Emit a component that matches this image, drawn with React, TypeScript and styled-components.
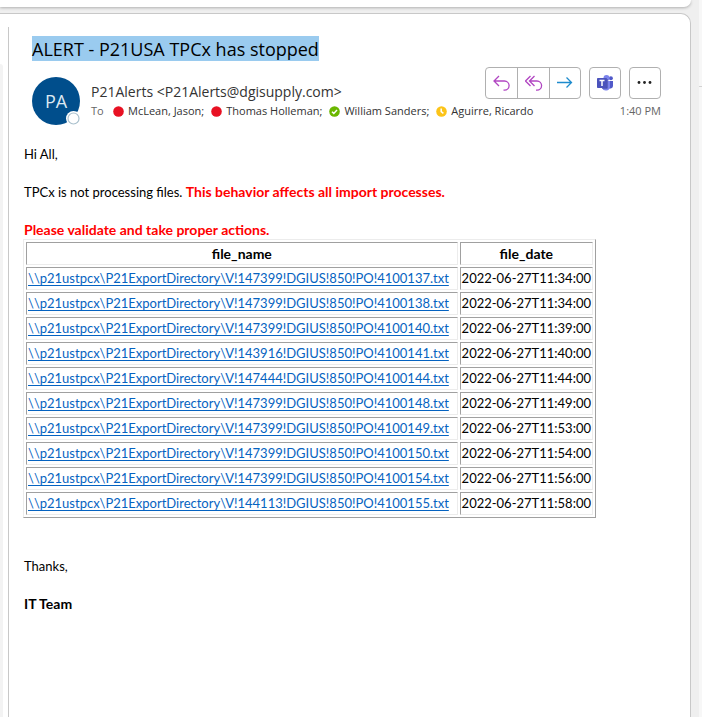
import React from "react";
import styled, { createGlobalStyle } from "styled-components";

const GlobalStyle = createGlobalStyle`
  * { box-sizing: border-box; }
  body { margin: 0; background: #efefef; }
`;

const uiFont = `"Open Sans", "Noto Sans", sans-serif`;

const Window = styled.div`
  display: flex;
  min-height: 100vh;
  font-family: ${uiFont};
  color: #333;
`;

const Workspace = styled.div`
  flex: 1;
  min-width: 0;
  display: flex;
  flex-direction: column;
  gap: 6px;
`;

const CommandPanel = styled.div`
  height: 7px;
  background: #fff;
  border-radius: 0 0 8px 0;
  box-shadow: 0 1px 3px #b0b0b0;
`;

const ReadingPanel = styled.div`
  flex: 1;
  display: flex;
  background: #fff;
  border: 1px solid #c8c8c8;
  border-width: 1px 1px 0 0;
  border-radius: 0 10px 0 0;
`;

const ListEdge = styled.div`
  width: 3px;
  margin-top: 50px;
  background: #f3f3f3;
  border-radius: 0 4px 0 0;
`;

const Message = styled.article`
  flex: 1;
  min-width: 0;
  margin: 13px 0 0 5px;
  padding: 9px 29px 0 15px;
  border-left: 1px solid #c8c8c8;
`;

const SideGutter = styled.div`
  width: 11px;
  flex: none;
  display: flex;
  flex-direction: column;
  padding-left: 8px;
`;

const SideTop = styled.div`
  height: 87px;
  background: #f7f7f7;
  border-bottom: 1px solid #d2d2d2;
`;

const SideRest = styled.div`
  flex: 1;
  background: #f7f7f7;
`;

const Subject = styled.h1`
  width: fit-content;
  margin: 0 0 0 8px;
  padding-top: 1px;
  font-size: 18px;
  line-height: 24px;
  font-weight: 400;
  color: #000;
  background: #9acbef;
  white-space: nowrap;
`;

const Header = styled.header`
  display: flex;
  margin: 5px 0 0 8px;
`;

const Avatar = styled.svg`
  flex: none;
  width: 49px;
  height: 49px;
  margin: 11px 10px 0 0;
  font-family: ${uiFont};
`;

const Details = styled.div`
  flex: 1;
  min-width: 0;
`;

const TopLine = styled.div`
  display: flex;
  justify-content: space-between;
`;

const BottomLine = styled.div`
  display: flex;
  justify-content: space-between;
  font-size: 11px;
  line-height: 18px;
  white-space: nowrap;
`;

const Sender = styled.div`
  padding-top: 16px;
  font-size: 14px;
  line-height: 20px;
  white-space: nowrap;
`;

const Actions = styled.div`
  display: flex;
  gap: 8px;
  padding-top: 1px;
`;

const ButtonGroup = styled.div`
  display: flex;
  height: 32px;
  border: 1px solid #b0b0b0;
  border-radius: 4px;
`;

const ActionButton = styled.button`
  width: 31px;
  padding: 0;
  border: 0;
  background: none;
  display: flex;
  align-items: center;
  justify-content: center;

  & + & {
    width: 32px;
    border-left: 1px solid #b0b0b0;
  }

  & + &:last-child {
    width: 31px;
  }
`;

const SingleButton = styled(ActionButton)`
  width: 30px;
`;

const Recipients = styled.div`
  display: flex;
  align-items: center;
`;

const ToLabel = styled.span`
  width: 22px;
  color: #666;
`;

const Recipient = styled.span`
  display: flex;
  align-items: center;
  gap: 4px;
  margin-right: 7px;
`;

const Time = styled.time`
  color: #666;
`;

const Body = styled.div`
  margin-top: 19px;
  font-family: Lato, "Liberation Sans", sans-serif;
  font-size: 13px;
  line-height: 19px;
  color: #000;
`;

const Paragraph = styled.p<{ $gap?: number }>`
  margin: 0 0 ${(p) => p.$gap ?? 19}px;
`;

const Strong = styled.strong<{ $alert?: boolean }>`
  font-size: 14px;
  line-height: 16px;
  color: ${(p) => (p.$alert ? "#f00" : "inherit")};
`;

const FileTable = styled.table`
  width: 100%;
  max-width: 573px;
  margin: -1px 0 39px -1px;
  border: 1px solid;
  border-color: #ececec #a0a0a0 #a0a0a0 #ececec;
  border-spacing: 2px;
`;

const cell = `
  height: 23px;
  padding: 0 1px;
  border: 1px solid;
  border-color: #a0a0a0 #ececec #ececec #a0a0a0;
  white-space: nowrap;
`;

const HeadCell = styled.th<{ $width?: number }>`
  ${cell}
  width: ${(p) => (p.$width ? `${p.$width}px` : "auto")};
  font-size: 14px;
`;

const Cell = styled.td`
  ${cell}
`;

const FileLink = styled.a`
  color: #0563c1;
  text-underline-offset: 2px;
`;

type Status = "busy" | "available" | "away";

const StatusIcon = ({ status }: { status: Status }) => (
  <svg width="11" height="11" viewBox="0 0 11 11" role="img" aria-label={status}>
    <circle cx="5.5" cy="5.5" r="5.3" fill={{ busy: "#e81123", available: "#6bb700", away: "#fcc419" }[status]} />
    {status === "available" && <path d="M3 5.7 4.8 7.4 8 4" fill="none" stroke="#fff" strokeWidth="1.5" />}
    {status === "away" && <path d="M5.2 2.5V5.7L7.4 7.4" fill="none" stroke="#fff" strokeWidth="1.5" />}
  </svg>
);

const ReplyIcon = () => (
  <svg width="18" height="18" viewBox="0 0 18 18" fill="none" stroke="#b146c2" strokeWidth="1.3">
    <path d="M6 2 1 7 6 12M1 7H11.5A4.6 4.6 0 0 1 11.5 16.2H10.5" />
  </svg>
);

const ReplyAllIcon = () => (
  <svg width="18" height="18" viewBox="0 0 18 18" fill="none" stroke="#b146c2" strokeWidth="1.3">
    <path d="M5.5 2 .5 7 5.5 12M9.5 2 4.5 7 9.5 12M4.5 7H12A4.6 4.6 0 0 1 12 16.2H11" />
  </svg>
);

const ForwardIcon = () => (
  <svg width="18" height="18" viewBox="0 0 18 18" fill="none" stroke="#1e8bcd" strokeWidth="1.3">
    <path d="M1 8.5H15.5M10.5 3.5 15.5 8.5 10.5 13.5" />
  </svg>
);

const TeamsIcon = () => (
  <svg width="18" height="18" viewBox="0 0 18 18">
    <circle cx="14.9" cy="4.2" r="2" fill="#5059c9" />
    <path d="M12.5 7H17V12A2.8 2.8 0 0 1 12.5 14Z" fill="#5059c9" />
    <circle cx="10.5" cy="4" r="3" fill="#7b83eb" />
    <path d="M6 7H14V13A4.2 4.2 0 0 1 6 14Z" fill="#7b83eb" />
    <path d="M7 5H11.5V14.5H6Z" fill="#3d4494" />
    <rect x="1" y="4" width="10" height="10" rx="0.8" fill="#4b53bc" />
    <path d="M3.5 6.5H8.5M6 6.5V12" stroke="#fff" strokeWidth="1.5" />
  </svg>
);

const MoreIcon = () => (
  <svg width="18" height="18" viewBox="0 0 18 18" fill="#222">
    <circle cx="3" cy="8.5" r="1.4" />
    <circle cx="8.5" cy="8.5" r="1.4" />
    <circle cx="14" cy="8.5" r="1.4" />
  </svg>
);

const recipients: { name: string; status: Status }[] = [
  { name: "McLean, Jason;", status: "busy" },
  { name: "Thomas Holleman;", status: "busy" },
  { name: "William Sanders;", status: "available" },
  { name: "Aguirre, Ricardo", status: "away" },
];

const files = [
  ["147399", "4100137", "11:34:00"],
  ["147399", "4100138", "11:34:00"],
  ["147399", "4100140", "11:39:00"],
  ["143916", "4100141", "11:40:00"],
  ["147444", "4100144", "11:44:00"],
  ["147399", "4100148", "11:49:00"],
  ["147399", "4100149", "11:53:00"],
  ["147399", "4100150", "11:54:00"],
  ["147399", "4100154", "11:56:00"],
  ["144113", "4100155", "11:58:00"],
];

export default function App() {
  return (
    <>
      <GlobalStyle />
      <Window>
        <Workspace>
          <CommandPanel />
          <ReadingPanel>
            <ListEdge />
            <Message>
              <Subject>ALERT - P21USA TPCx has stopped</Subject>
              <Header>
                <Avatar viewBox="0 0 49 49" role="img" aria-label="P21Alerts">
                  <circle cx="24" cy="24" r="24" fill="#004e8c" />
                  <text x="24" y="31" textAnchor="middle" fontSize="18" fill="#dce8f2">PA</text>
                  <circle cx="41.5" cy="41.5" r="7.5" fill="#fff" />
                  <circle cx="41.5" cy="41.5" r="5.5" fill="#fff" stroke="#a9c0cd" strokeWidth="1.2" />
                </Avatar>
                <Details>
                  <TopLine>
                    <Sender>P21Alerts &lt;P21Alerts@dgisupply.com&gt;</Sender>
                    <Actions>
                      <ButtonGroup>
                        <ActionButton aria-label="Reply"><ReplyIcon /></ActionButton>
                        <ActionButton aria-label="Reply all"><ReplyAllIcon /></ActionButton>
                        <ActionButton aria-label="Forward"><ForwardIcon /></ActionButton>
                      </ButtonGroup>
                      <ButtonGroup>
                        <SingleButton aria-label="Share to Teams"><TeamsIcon /></SingleButton>
                      </ButtonGroup>
                      <ButtonGroup>
                        <SingleButton aria-label="More actions"><MoreIcon /></SingleButton>
                      </ButtonGroup>
                    </Actions>
                  </TopLine>
                  <BottomLine>
                    <Recipients>
                      <ToLabel>To</ToLabel>
                      {recipients.map((r) => (
                        <Recipient key={r.name}>
                          <StatusIcon status={r.status} />
                          {r.name}
                        </Recipient>
                      ))}
                    </Recipients>
                    <Time>1:40 PM</Time>
                  </BottomLine>
                </Details>
              </Header>
              <Body>
                <Paragraph>Hi All,</Paragraph>
                <Paragraph>
                  TPCx is not processing files. <Strong $alert>This behavior affects all import processes.</Strong>
                </Paragraph>
                <Paragraph $gap={0}>
                  <Strong $alert>Please validate and take proper actions.</Strong>
                </Paragraph>
                <FileTable>
                  <thead>
                    <tr>
                      <HeadCell scope="col">file_name</HeadCell>
                      <HeadCell scope="col" $width={133}>file_date</HeadCell>
                    </tr>
                  </thead>
                  <tbody>
                    {files.map(([vendor, order, time]) => (
                      <tr key={order}>
                        <Cell>
                          <FileLink href="#">{`\\\\p21ustpcx\\P21ExportDirectory\\V!${vendor}!DGIUS!850!PO!${order}.txt`}</FileLink>
                        </Cell>
                        <Cell>2022-06-27T{time}</Cell>
                      </tr>
                    ))}
                  </tbody>
                </FileTable>
                <Paragraph>Thanks,</Paragraph>
                <Paragraph><Strong>IT Team</Strong></Paragraph>
              </Body>
            </Message>
          </ReadingPanel>
        </Workspace>
        <SideGutter>
          <SideTop />
          <SideRest />
        </SideGutter>
      </Window>
    </>
  );
}
